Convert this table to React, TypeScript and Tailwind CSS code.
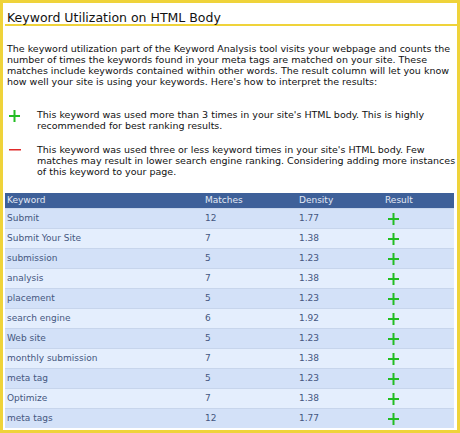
const rows: [string, number, string][] = [
  ["Submit", 12, "1.77"],
  ["Submit Your Site", 7, "1.38"],
  ["submission", 5, "1.23"],
  ["analysis", 7, "1.38"],
  ["placement", 5, "1.23"],
  ["search engine", 6, "1.92"],
  ["Web site", 5, "1.23"],
  ["monthly submission", 7, "1.38"],
  ["meta tag", 5, "1.23"],
  ["Optimize", 7, "1.38"],
  ["meta tags", 12, "1.77"],
];

function Plus() {
  return (
    <svg width="11" height="12" viewBox="0 0 11 12" className="block">
      <rect x="0" y="5" width="11" height="2" fill="#22bd22" />
      <rect x="4.5" y="0" width="2" height="12" fill="#22bd22" />
    </svg>
  );
}

function Minus() {
  return (
    <svg width="12" height="2" viewBox="0 0 12 2" className="block">
      <rect x="0" y="0" width="12" height="1.5" fill="#e02a2a" />
    </svg>
  );
}

export default function App() {
  return (
    <div className="h-[433px] w-[460px] overflow-hidden border-[3px] border-[#efd33a] bg-white font-['DejaVu_Sans',sans-serif] text-[#111]">
      <div className="pl-[2px] pt-[8px]">
        <h1 className="h-[15px] whitespace-nowrap border-b-2 border-[#efd33a] pl-[2px] text-[12.5px] leading-[14px]">
          Keyword Utilization on HTML Body
        </h1>
        <p className="mt-[17px] whitespace-nowrap pl-[2px] text-[9.5px] leading-[11px]">
          The keyword utilization part of the Keyword Analysis tool visits your webpage and counts the
          <br />
          number of times the keywords found in your meta tags are matched on your site. These
          <br />
          matches include keywords contained within other words. The result column will let you know
          <br />
          how well your site is using your keywords. Here's how to interpret the results:
        </p>
        <div className="mt-[22px] flex whitespace-nowrap text-[9.5px] leading-[11px]">
          <div className="w-[32px] pl-[4px] pt-[1px]">
            <Plus />
          </div>
          <p>
            This keyword was used more than 3 times in your site's HTML body. This is highly
            <br />
            recommended for best ranking results.
          </p>
        </div>
        <div className="mt-[13px] flex whitespace-nowrap text-[9.5px] leading-[11px]">
          <div className="w-[32px] pl-[4px] pt-[5px]">
            <Minus />
          </div>
          <p>
            This keyword was used three or less keyword times in your site's HTML body. Few
            <br />
            matches may result in lower search engine ranking. Considering adding more instances
            <br />
            of this keyword to your page.
          </p>
        </div>
        <div className="mt-[16px] w-[449px] text-[9px] text-[#45577f]">
          <div className="flex h-[15px] items-center bg-[#3e6099] text-[#e3e9f5]">
            <div className="w-[200px] pl-[2px]">Keyword</div>
            <div className="w-[94px]">Matches</div>
            <div className="w-[86px]">Density</div>
            <div>Result</div>
          </div>
          {rows.map(([k, m, d], i) => (
            <div
              key={k}
              className={`flex h-[20px] items-center border-t border-[#c7d5ec] ${i % 2 === 0 ? "bg-[#d3e1f8]" : "bg-[#e4eefd]"}`}
            >
              <div className="w-[200px] pl-[2px]">{k}</div>
              <div className="w-[94px]">{m}</div>
              <div className="w-[89px]">{d}</div>
              <div>
                <Plus />
              </div>
            </div>
          ))}
        </div>
      </div>
    </div>
  );
}
